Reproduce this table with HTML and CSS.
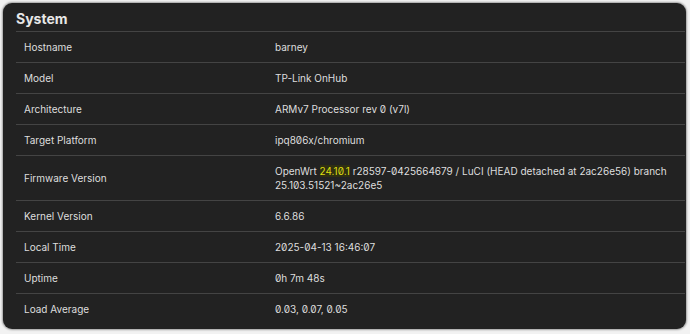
FILE: index.html
```html
<!DOCTYPE html>
<html>
<head>
<meta charset="utf-8">
<link rel="stylesheet" href="styles.css">
</head>
<body>
<div class="card">
  <h3 class="title">System</h3>
  <table class="info">
    <tr><td class="lbl">Hostname</td><td>barney</td></tr>
    <tr><td class="lbl">Model</td><td>TP-Link OnHub</td></tr>
    <tr><td class="lbl">Architecture</td><td>ARMv7 Processor rev 0 (v7l)</td></tr>
    <tr><td class="lbl">Target Platform</td><td>ipq806x/chromium</td></tr>
    <tr><td class="lbl">Firmware Version</td><td>OpenWrt <span class="hl">24.10.1</span> r28597-0425664679 / LuCI (HEAD detached at 2ac26e56) branch 25.103.51521~2ac26e5</td></tr>
    <tr><td class="lbl">Kernel Version</td><td>6.6.86</td></tr>
    <tr><td class="lbl">Local Time</td><td>2025-04-13 16:46:07</td></tr>
    <tr><td class="lbl">Uptime</td><td>0h 7m 48s</td></tr>
    <tr><td class="lbl">Load Average</td><td>0.03, 0.07, 0.05</td></tr>
  </table>
</div>
</body>
</html>
```

FILE: styles.css
```css
html, body {
  margin: 0;
  padding: 0;
  background: #f2f2f2;
}
body {
  padding: 3px 4px 5px 3px;
  font-family: Inter, "DejaVu Sans", sans-serif;
  font-feature-settings: "zero" 1, "tnum" 0;
  font-variant-numeric: proportional-nums slashed-zero;
}
.card {
  background: #222222;
  border-radius: 9px;
  box-shadow: 0 0 2px 1px rgba(0,0,0,0.35);
  padding: 0 1px 5px 13px;
  height: 326px;
  box-sizing: border-box;
  overflow: hidden;
}
.title {
  margin: 0;
  padding: 6px 0 3px 0;
  font-size: 14px;
  line-height: 19px;
  font-weight: 700;
  color: #e8e8e8;
  border-bottom: 1px solid #444444;
}
.info {
  width: 100%;
  border-collapse: collapse;
  font-size: 10px;
  line-height: 14px;
  color: #dedede;
}
.info td {
  padding: 8px 8px 8px 8px;
  border-top: 1px solid #444444;
  vertical-align: middle;
}
.info tr:first-child td {
  border-top: none;
}
.info .lbl {
  width: 235px;
}
.hl {
  color: #dede10;
  background: #2f2f12;
}
```
